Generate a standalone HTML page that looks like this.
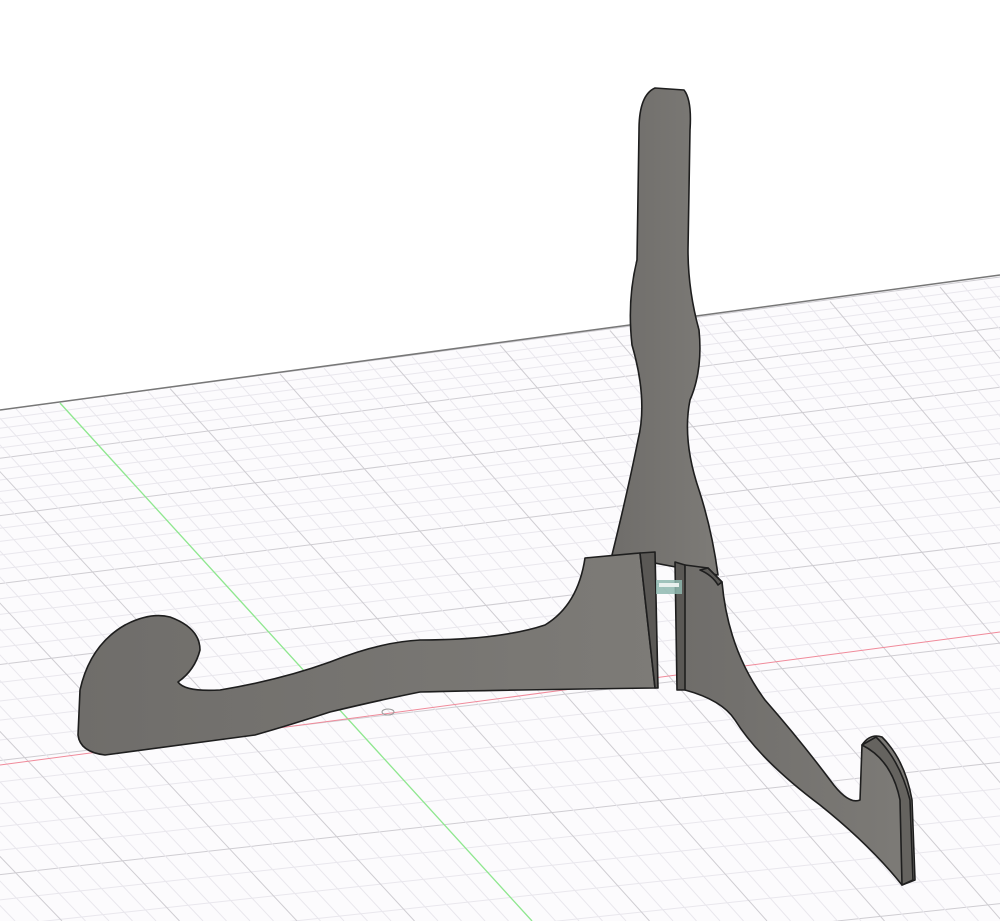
<!DOCTYPE html>
<html><head><meta charset="utf-8"><style>
html,body{margin:0;padding:0;background:#fff;width:1000px;height:921px;overflow:hidden}
svg{display:block}
</style></head><body>
<svg id="s" width="1000" height="921" viewBox="0 0 1000 921" xmlns="http://www.w3.org/2000/svg">
<defs><clipPath id="plane"><polygon points="0,410 1000,275 1000,921 0,921"/></clipPath>
<linearGradient id="g1" x1="0" x2="1"><stop offset="0" stop-color="#6f6d6a"/><stop offset="1" stop-color="#7d7b77"/></linearGradient></defs>
<polygon points="0,410 1000,275 1000,921 0,921" fill="#fcfbfd"/>
<g id="grid" clip-path="url(#plane)" stroke-width="1"></g>
<line x1="0" y1="410" x2="1000" y2="275" stroke="#777" stroke-width="1.5"/>
<line x1="60" y1="403" x2="532" y2="921" stroke="#8fe88f" stroke-width="1.3"/>
<line x1="0" y1="765" x2="1000" y2="632" stroke="#f08a9a" stroke-width="1"/>
<ellipse cx="388" cy="712" rx="6" ry="3" fill="none" stroke="#999"/>
<g fill="url(#g1)" stroke="#1e1e1e" stroke-width="1.6" stroke-linejoin="round">
<path d="M655,88 L684,90 Q692,100 690,130 L688,250 Q688,290 699,330 Q703,370 690,400 Q682,440 699,490 Q712,530 718,575 L612,555 Q628,490 638,440 Q648,400 632,345 Q627,300 637,260 L639,130 Q639,95 655,88 Z"/>
<path d="M585,558 L640,553 L655,688 Q500,690 420,692 Q380,700 330,712 Q290,725 255,735 L105,755 Q80,752 78,735 L80,690 Q90,645 125,625 Q150,612 170,617 Q200,628 200,650 Q195,670 178,682 Q185,692 220,690 Q280,680 330,662 Q380,642 420,640 Q500,640 545,625 Q578,605 585,558 Z"/>
<path d="M640,553 L655,552 L658,688 L655,688 Z" fill="#5a5855"/>
<path d="M675,562 L685,565 L688,690 L677,690 Z" fill="#5a5855"/>
<path d="M685,565 L708,568 L722,582 Q728,650 765,700 Q800,740 830,780 Q848,805 860,800 L862,745 Q870,733 882,737 Q905,760 912,800 L915,880 L902,885 Q870,845 820,805 Q760,760 735,720 Q722,700 685,690 Z"/>
<path d="M708,568 L722,582 L718,585 Q712,575 700,570 Z" fill="#5a5855"/>
<path d="M862,745 L876,737 Q900,760 910,800 L913,880 L902,885 L900,800 Q892,760 862,745 Z" fill="#65635f"/>
</g>
<rect x="656" y="580" width="26" height="14" fill="#8fb8b0" opacity="0.85"/>
<rect x="659" y="583" width="20" height="4" fill="#e8f0ee"/>
</svg>
<script>
var g=document.getElementById('grid'),ns='http://www.w3.org/2000/svg';
function L(x1,y1,x2,y2,c){var l=document.createElementNS(ns,'line');l.setAttribute('x1',x1);l.setAttribute('y1',y1);l.setAttribute('x2',x2);l.setAttribute('y2',y2);l.setAttribute('stroke',c);g.appendChild(l);}
var y=410,step=9,i=0;
while(y<1200){L(0,y,1000,y-0.133*1000*(1-(y-410)/3000),i%5==0?'#cfcdd2':'#e9e7ed');y+=step;step*=1.035;i++;}
for(var k=-60;k<60;k++){var x0=60+k*22;L(x0,403-k*2.9,x0+472+k*1.5,921,k%5==0?'#cfcdd2':'#e9e7ed');}
</script>
</body></html>
